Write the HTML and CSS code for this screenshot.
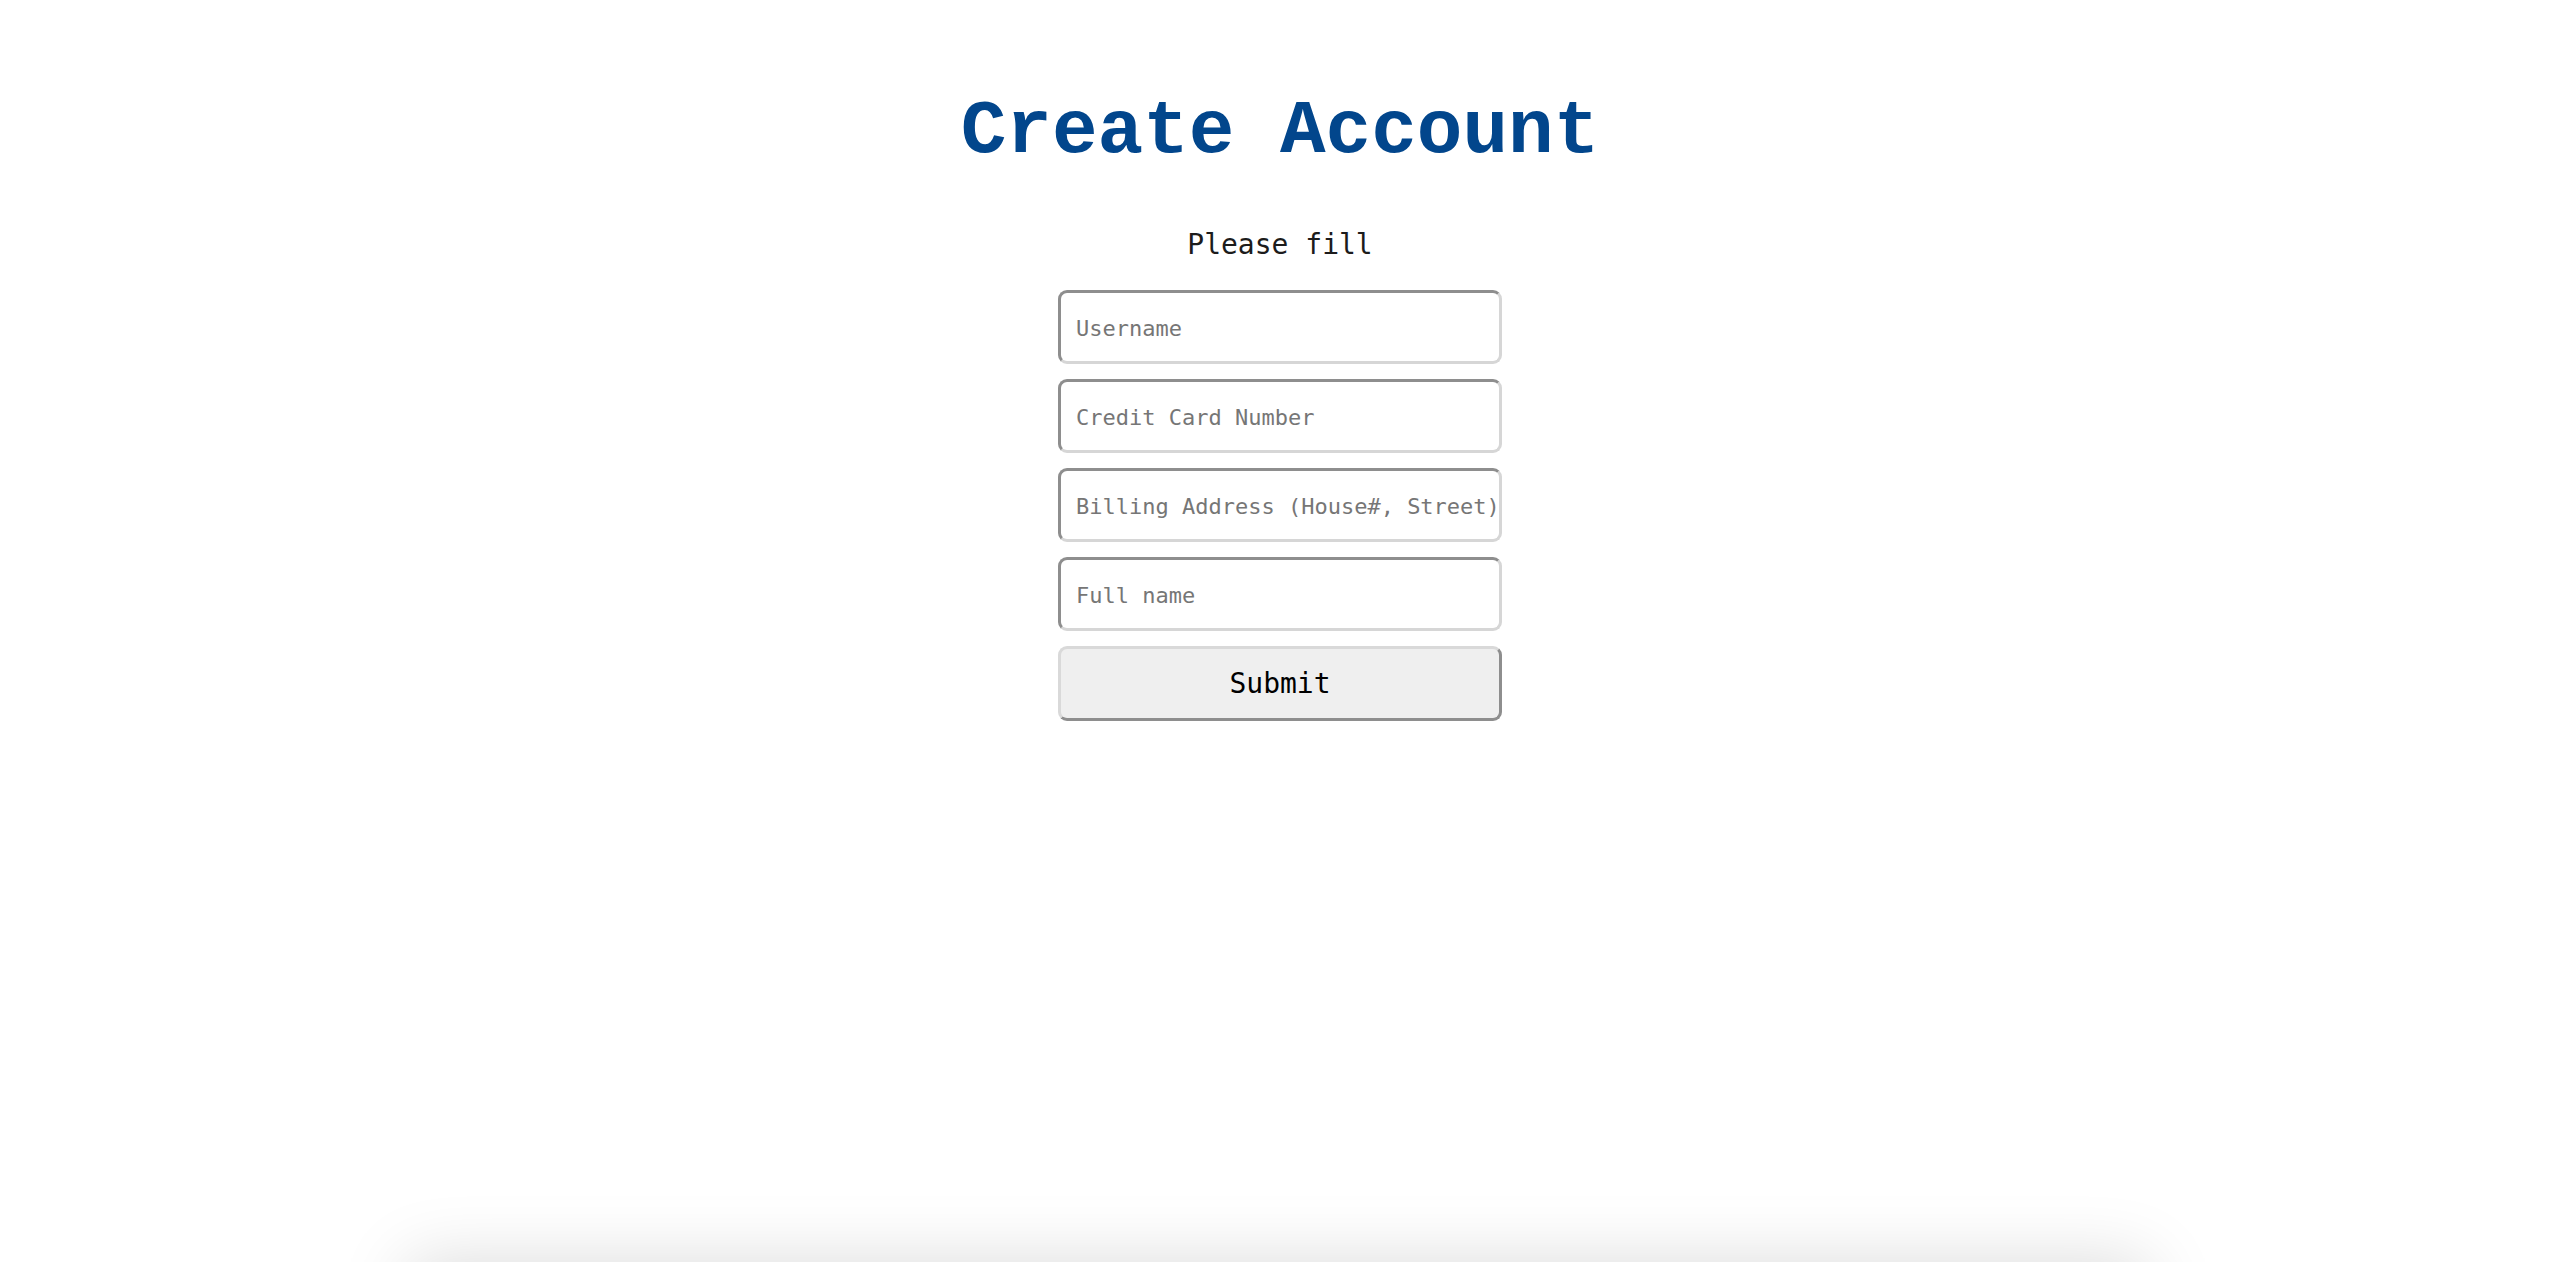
FILE: index.html
```html
<!DOCTYPE html>
<html lang="en">
<head>
<meta charset="utf-8">
<title>Create Account</title>
<link rel="stylesheet" href="styles.css">
</head>
<body>
<main class="page">
  <h1 class="title">Create Account</h1>
  <p class="lead">Please fill</p>
  <form class="form">
    <input class="field" type="text" placeholder="Username">
    <input class="field" type="text" placeholder="Credit Card Number">
    <input class="field" type="text" placeholder="Billing Address (House#, Street)">
    <input class="field" type="text" placeholder="Full name">
    <button class="submit" type="button">Submit</button>
  </form>
</main>
<div class="dock-shadow"></div>
</body>
</html>
```

FILE: styles.css
```css
html, body {
  margin: 0;
  padding: 0;
  background: #ffffff;
}

body {
  font-family: "DejaVu Sans Mono", "Liberation Mono", monospace;
  color: #1a1a1a;
  overflow: hidden;
  height: 1262px;
}

.page {
  display: flex;
  flex-direction: column;
  align-items: center;
  padding-top: 94px;
}

.title {
  margin: 0;
  font-family: "Liberation Mono", "Courier New", monospace;
  font-weight: bold;
  font-size: 76px;
  line-height: 76px;
  color: #02468c;
}

.lead {
  margin: 58px 0 0;
  font-size: 28px;
  line-height: 34px;
  color: #1c1c1c;
}

.form {
  margin-top: 28px;
  width: 444px;
  display: flex;
  flex-direction: column;
  gap: 15px;
}

.field {
  box-sizing: border-box;
  width: 100%;
  height: 74px;
  margin: 0;
  padding: 2px 0 0 15px;
  border-style: solid;
  border-width: 3px;
  border-color: #8e8e8e #d6d6d6 #d6d6d6 #8e8e8e;
  border-radius: 9px;
  background: #ffffff;
  font-family: "DejaVu Sans Mono", monospace;
  font-size: 22px;
  color: #222;
  outline: none;
}

.field::placeholder {
  color: #767676;
  opacity: 1;
}

.submit {
  box-sizing: border-box;
  width: 100%;
  height: 75px;
  margin: 0;
  padding: 0;
  border-style: solid;
  border-width: 3px;
  border-color: #d9d9d9 #8e8e8e #8e8e8e #d9d9d9;
  border-radius: 9px;
  background: #efefef;
  font-family: "DejaVu Sans Mono", monospace;
  font-size: 28px;
  color: #000000;
}

.dock-shadow {
  position: fixed;
  left: 408px;
  width: 1740px;
  top: 100%;
  height: 200px;
  box-shadow: 0 0 70px rgba(0, 0, 0, 0.15);
  background: #ffffff;
}
```
